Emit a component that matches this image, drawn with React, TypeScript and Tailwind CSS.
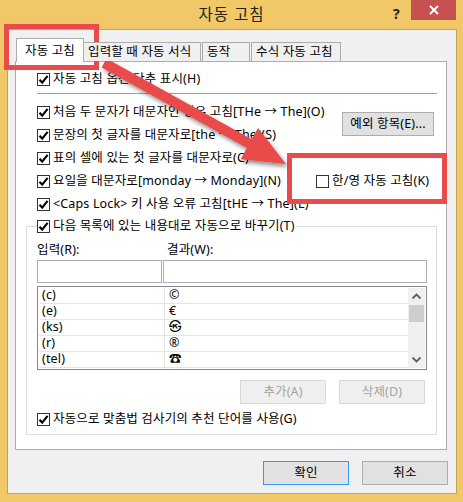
import React from "react";

const font = { fontFamily: '"Noto Sans", "Noto Sans CJK KR", sans-serif' };

const Check = ({ checked = true }: { checked?: boolean }) => (
  <span className="w-[13px] h-[13px] border border-[#333333] bg-white flex items-center justify-center shrink-0">
    {checked && (
      <svg width="11" height="11" viewBox="0 0 11 11">
        <path d="M1.5 5.8 L4.2 8.6 L9.6 1.8" stroke="#000" strokeWidth="2.1" fill="none" />
      </svg>
    )}
  </span>
);

const Row = ({ label, checked = true }: { label: string; checked?: boolean }) => (
  <div className="flex items-center h-[23px] gap-[3px]">
    <Check checked={checked} />
    <span className="whitespace-nowrap">{label}</span>
  </div>
);

const Tab = ({ label, active, w }: { label: string; active?: boolean; w: string }) => (
  <div
    className={`${w} ${
      active ? "h-[24px] bg-white -mb-px z-10 pt-[1px]" : "h-[19px] bg-[#f0f0f0]"
    } border border-b-0 border-[#acacac] flex items-center px-[4px] shrink-0 whitespace-nowrap`}
  >
    {label}
  </div>
);

const rows = [
  ["(c)", "©"],
  ["(e)", "€"],
  ["(ks)", "㉿"],
  ["(r)", "®"],
  ["(tel)", "☎"],
];

const Btn = ({ label, w, disabled, def }: { label: string; w: string; disabled?: boolean; def?: boolean }) => (
  <div
    className={`${w} h-[24px] flex items-center justify-center border ${
      disabled
        ? "border-[#d9d9d9] bg-[#efefef] text-[#a3a3a3]"
        : def
        ? "border-[#3399ff] bg-[#e1e1e1]"
        : "border-[#adadad] bg-[#e1e1e1]"
    }`}
  >
    {label}
  </div>
);

export default function App() {
  return (
    <div
      className="w-[463px] h-[502px] bg-[#f0c868] relative text-[12.5px] tracking-[0.15px] text-black overflow-hidden"
      style={font}
    >
      {/* title bar */}
      <div className="h-[29px] relative flex items-center justify-center text-[15.5px] text-[#222]">
        <span className="tracking-[1px]">자동 고침</span>
        <span className="absolute left-[393px] top-[3px] font-bold text-[14px] text-[#222]">?</span>
        <div className="absolute left-[411px] top-0 w-[45px] h-[20px] bg-[#c75050] flex items-center justify-center">
          <svg width="10" height="10" viewBox="0 0 10 10">
            <path d="M1 1 L9 9 M9 1 L1 9" stroke="#fff" strokeWidth="2" />
          </svg>
        </div>
      </div>

      {/* client */}
      <div className="ml-[7px] w-[450px] h-[465px] border border-[#c7a455] bg-[#f0f0f0] pt-[7px]">
        {/* tabs */}
        <div className="flex items-end pl-[8px] h-[24px] relative z-10">
          <Tab label="자동 고침" active w="w-[68px] justify-center" />
          <Tab label="입력할 때 자동 서식" w="w-[118px] -ml-px" />
          <Tab label="동작" w="w-[48px] ml-[1px]" />
          <Tab label="수식 자동 고침" w="w-[90px] ml-[1px]" />
        </div>

        {/* panel */}
        <div className="ml-[7px] w-[432px] h-[389px] border border-[#acacac] bg-white pl-[21px] pt-[6px]">
          <Row label="자동 고침 옵션 단추 표시(H)" />
          <div className="w-[400px] h-px bg-[#a0a0a0] mt-[2px]" />
          <div className="flex mt-[7px]">
            <div className="w-[305px]">
              <Row label="처음 두 문자가 대문자인 경우 고침[THe → The](O)" />
              <Row label="문장의 첫 글자를 대문자로[the → The](S)" />
            </div>
            <div className="flex items-center">
              <Btn label="예외 항목(E)..." w="w-[92px]" />
            </div>
          </div>
          <Row label="표의 셀에 있는 첫 글자를 대문자로(C)" />
          <div className="flex">
            <div className="w-[279px]">
              <Row label="요일을 대문자로[monday → Monday](N)" />
            </div>
            <Row label="한/영 자동 고침(K)" checked={false} />
          </div>
          <Row label="<Caps Lock> 키 사용 오류 고침[tHE → The](L)" />

          {/* group */}
          <div className="-ml-[11px] w-[411px] mt-[10px] border border-[#dcdcdc] pl-[10px] pb-[4px]">
            <div className="-mt-[12px] h-[22px] w-fit bg-white pr-[2px]">
              <Row label="다음 목록에 있는 내용대로 자동으로 바꾸기(T)" />
            </div>
            <div className="flex h-[16px] mt-[5px] items-center">
              <span className="w-[130px]">입력(R):</span>
              <span>결과(W):</span>
            </div>
            <div className="flex mt-[2px] gap-[1px]">
              <div className="w-[125px] h-[23px] border border-[#abadb3] bg-white" />
              <div className="w-[264px] h-[23px] border border-[#abadb3] bg-white" />
            </div>
            <div className="w-[390px] h-[84px] mt-[3px] border border-[#828790] p-px flex bg-white">
              <div className="flex-1">
                {rows.map(([a, b]) => (
                  <div key={a} className="flex h-[16px] border-b border-[#e4e4e4]">
                    <div className="w-[126px] border-r border-[#e4e4e4] pl-[3px] flex items-center">{a}</div>
                    <div className="pl-[4px] flex items-center">{b}</div>
                  </div>
                ))}
              </div>
              <div className="w-[17px] bg-[#f0f0f0] flex flex-col items-center">
                <svg width="17" height="17" viewBox="0 0 17 17">
                  <path d="M4.5 10.5 L8.5 6.5 L12.5 10.5" stroke="#606060" strokeWidth="1.8" fill="none" />
                </svg>
                <div className="w-[15px] h-[17px] bg-[#cdcdcd]" />
                <div className="flex-1" />
                <svg width="17" height="17" viewBox="0 0 17 17">
                  <path d="M4.5 6.5 L8.5 10.5 L12.5 6.5" stroke="#606060" strokeWidth="1.8" fill="none" />
                </svg>
              </div>
            </div>
            <div className="flex justify-end gap-[13px] mt-[10px] w-[388px]">
              <Btn label="추가(A)" w="w-[86px]" disabled />
              <Btn label="삭제(D)" w="w-[86px]" disabled />
            </div>
            <div className="mt-[4px] h-[22px] flex items-center">
              <Row label="자동으로 맞춤법 검사기의 추천 단어를 사용(G)" />
            </div>
          </div>
        </div>

        {/* dialog buttons */}
        <div className="flex justify-end gap-[13px] mt-[11px] pr-[8px]">
          <Btn label="확인" w="w-[86px]" def />
          <Btn label="취소" w="w-[86px]" />
        </div>
      </div>

      {/* annotations */}
      <div className="absolute left-[4px] top-[24px] w-[95px] h-[46px] border-[5px] border-[#e94b4b]" />
      <div className="absolute left-[287px] top-[153px] w-[160px] h-[51px] border-[5px] border-[#e94b4b]" />
      <svg className="absolute left-0 top-0 pointer-events-none" width="463" height="502" viewBox="0 0 463 502">
        <defs>
          <filter id="sh" x="-20%" y="-20%" width="140%" height="140%">
            <feGaussianBlur in="SourceAlpha" stdDeviation="2" />
            <feOffset dx="2" dy="3" result="b" />
            <feComponentTransfer>
              <feFuncA type="linear" slope="0.45" />
            </feComponentTransfer>
            <feMerge>
              <feMergeNode />
              <feMergeNode in="SourceGraphic" />
            </feMerge>
          </filter>
        </defs>
        <g filter="url(#sh)" fill="#e94b4b">
          <path d="M101.6 67.4 L106.4 58.6 L251.7 139.2 L258 127.9 L286 164 L240.6 159.3 L246.9 148 Z" />
        </g>
      </svg>
    </div>
  );
}
